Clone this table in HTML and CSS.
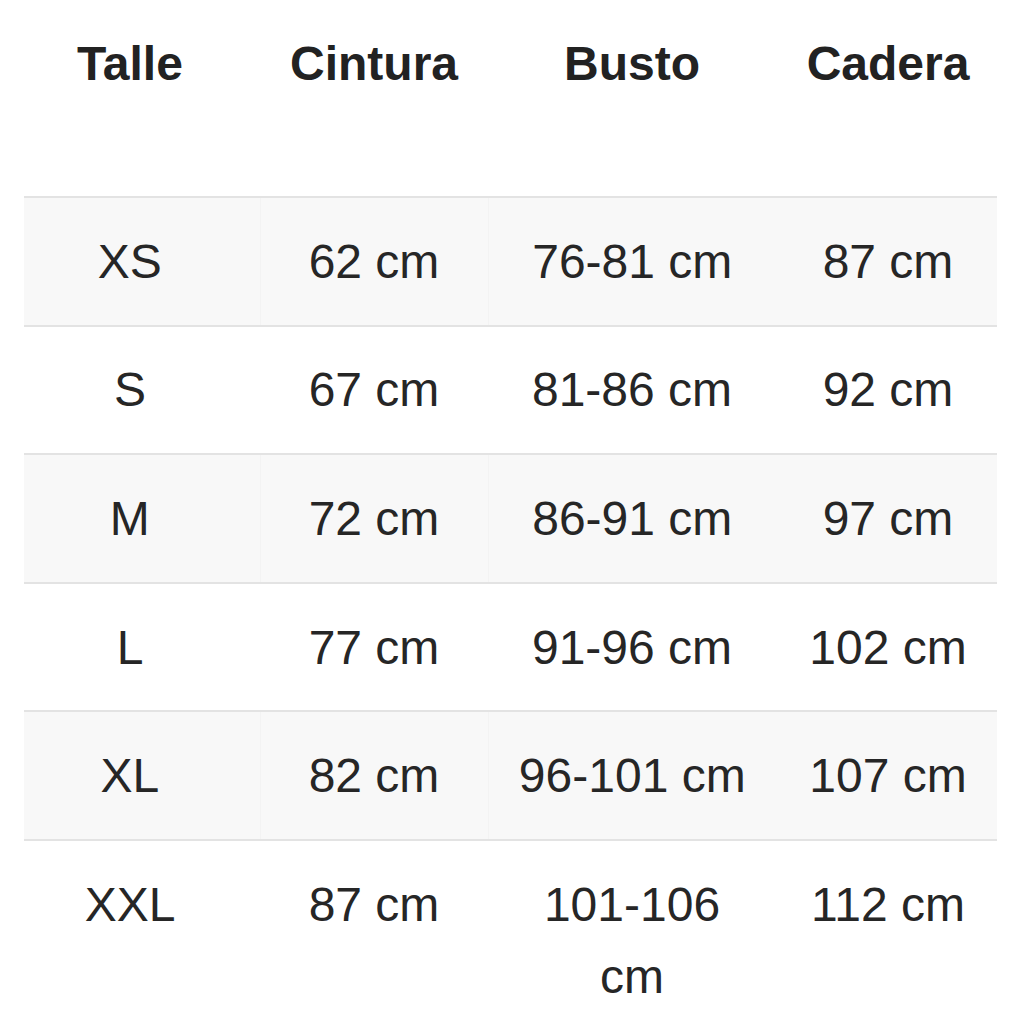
FILE: index.html
```html
<!DOCTYPE html>
<html lang="es">
<head>
<meta charset="utf-8">
<title>Guía de talles</title>
<link rel="stylesheet" href="styles.css">
</head>
<body>
<table class="sizes">
  <colgroup>
    <col class="c1"><col class="c2"><col class="c3"><col class="c4">
  </colgroup>
  <thead>
    <tr>
      <th class="first">Talle</th>
      <th class="mid">Cintura</th>
      <th class="mid">Busto</th>
      <th class="last">Cadera</th>
    </tr>
  </thead>
  <tbody>
    <tr class="alt"><td class="first">XS</td><td class="mid div">62 cm</td><td class="mid div">76-81 cm</td><td class="last">87 cm</td></tr>
    <tr><td class="first">S</td><td class="mid div">67 cm</td><td class="mid div">81-86 cm</td><td class="last">92 cm</td></tr>
    <tr class="alt"><td class="first">M</td><td class="mid div">72 cm</td><td class="mid div">86-91 cm</td><td class="last">97 cm</td></tr>
    <tr><td class="first">L</td><td class="mid div">77 cm</td><td class="mid div">91-96 cm</td><td class="last">102 cm</td></tr>
    <tr class="alt"><td class="first">XL</td><td class="mid div">82 cm</td><td class="mid div">96-101 cm</td><td class="last">107 cm</td></tr>
    <tr><td class="first">XXL</td><td class="mid div">87 cm</td><td class="mid div">101-106 cm</td><td class="last">112 cm</td></tr>
  </tbody>
</table>
</body>
</html>
```
FILE: styles.css
```css
html, body {
  margin: 0;
  padding: 0;
  background: #ffffff;
}

body {
  font-family: "Liberation Sans", Arial, Helvetica, sans-serif;
  color: #262626;
}

.sizes {
  margin-left: 24px;
  width: 973px;
  table-layout: fixed;
  border-collapse: collapse;
  border-spacing: 0;
}

.c1 { width: 236px; }
.c2 { width: 228px; }
.c3 { width: 288px; }
.c4 { width: 221px; }

.sizes th,
.sizes td {
  font-size: 48px;
  line-height: 72px;
  text-align: center;
}

.sizes th {
  font-weight: bold;
  color: #222222;
  vertical-align: top;
  padding-top: 28px;
  padding-bottom: 96px;
}

.sizes td {
  font-weight: normal;
  vertical-align: top;
  padding-top: 27.8px;
  padding-bottom: 26.8px;
  border-top: 2px solid #e3e3e3;
}

.sizes .first { padding-left: 0; padding-right: 24px; }
.sizes .mid { padding-left: 24px; padding-right: 24px; }
.sizes .last { padding-left: 3px; padding-right: 0; }

.sizes tr.alt td {
  background: #f8f8f8;
}

.sizes tr.alt td.div {
  border-left: 1px solid #f3f3f3;
}

.sizes td.div + td.last {
  border-left: none;
}
```
